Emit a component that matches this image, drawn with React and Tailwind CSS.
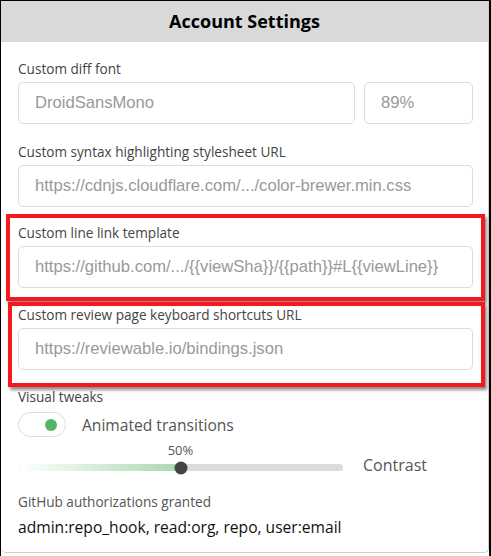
import React from "react";

const labelCls = "h-5 leading-5 text-[13.6px] text-[#444] font-['Open_Sans',sans-serif]";
const inputCls =
  "w-full h-[42px] border border-[#dcdcdc] rounded-[5px] px-[16px] text-[16.6px] font-['Liberation_Sans',Arial,sans-serif] text-[#999] placeholder:text-[#999] bg-white outline-none";

function Field({ label, placeholder, className = "" }) {
  return (
    <div className={className}>
      <div className={labelCls}>{label}</div>
      <input readOnly className={inputCls + " mt-[3px]"} placeholder={placeholder} />
    </div>
  );
}

export default function App() {
  const value = 50;
  return (
    <div className="w-[491px] h-[556px] bg-white border-t border-l border-r-2 border-black relative overflow-hidden">
      <div className="h-[552px] border-r border-b border-[#cfcfcf] rounded-b-[5px] flex flex-col">
        <div className="h-[41px] shrink-0 bg-[#d9d9d9] flex items-center justify-center text-[18px] font-bold text-black font-['Open_Sans',sans-serif]">
          Account Settings
        </div>
        <div className="pl-[17px] pr-[15px] pt-[17px] flex flex-col">
          <div>
            <div className={labelCls}>Custom diff font</div>
            <div className="mt-[3px] flex gap-[9px]">
              <input readOnly className={inputCls + " flex-1"} placeholder="DroidSansMono" />
              <input readOnly className={inputCls + " !w-[109px] shrink-0"} placeholder="89%" />
            </div>
          </div>
          <Field
            className="mt-[18px]"
            label="Custom syntax highlighting stylesheet URL"
            placeholder="https://cdnjs.cloudflare.com/.../color-brewer.min.css"
          />
          <Field
            className="mt-[16px]"
            label="Custom line link template"
            placeholder="https://github.com/.../{{viewSha}}/{{path}}#L{{viewLine}}"
          />
          <Field
            className="mt-[17px]"
            label="Custom review page keyboard shortcuts URL"
            placeholder="https://reviewable.io/bindings.json"
          />
          <div className={labelCls + " mt-[17px]"}>Visual tweaks</div>
          <div className="mt-[5px] flex items-center gap-[16px]">
            <div className="w-[48px] h-[25px] rounded-full border border-[#dedede] bg-white flex items-center justify-end pr-[8px]">
              <div className="w-[12px] h-[12px] rounded-full bg-[#55b567]" />
            </div>
            <div className="text-[15.6px] text-[#555] font-['Open_Sans',sans-serif] leading-5">
              Animated transitions
            </div>
          </div>
          <div className="mt-[5px] flex items-end gap-[20px]">
            <div className="w-[325px] flex flex-col">
              <div className="relative h-[16px]">
                <span
                  className="absolute top-0 -translate-x-1/2 text-[13px] leading-4 text-[#555] font-['Open_Sans',sans-serif]"
                  style={{ left: `${value}%` }}
                >
                  50%
                </span>
              </div>
              <div className="relative mt-[6px] h-[7px] rounded-full bg-[#dcdcdc]">
                <div
                  className="absolute left-0 top-0 h-full rounded-l-full bg-gradient-to-r from-white to-[#a9d8b1]"
                  style={{ width: `${value}%` }}
                />
                <div
                  className="absolute top-1/2 w-[13px] h-[13px] -translate-x-1/2 -translate-y-1/2 rounded-full bg-[#444]"
                  style={{ left: `${value}%` }}
                />
              </div>
            </div>
            <div className="text-[16px] text-[#555] font-['Open_Sans',sans-serif] leading-5 -mb-[4px]">
              Contrast
            </div>
          </div>
          <div className={labelCls + " mt-[21px] text-[#555]"}>GitHub authorizations granted</div>
          <div className="mt-[5px] text-[15.6px] leading-5 text-[#111] font-['Open_Sans',sans-serif]">
            admin:repo_hook, read:org, repo, user:email
          </div>
        </div>
      </div>

      <div className="absolute left-[5px] top-[213px] w-[479px] h-[87px] border-[4px] border-[#f5191f] shadow-[2px_3px_3px_rgba(0,0,0,0.45)] pointer-events-none" />
      <div className="absolute left-[7px] top-[301px] w-[477px] h-[85px] border-[4px] border-[#f5191f] shadow-[2px_3px_3px_rgba(0,0,0,0.45)] pointer-events-none" />
    </div>
  );
}
